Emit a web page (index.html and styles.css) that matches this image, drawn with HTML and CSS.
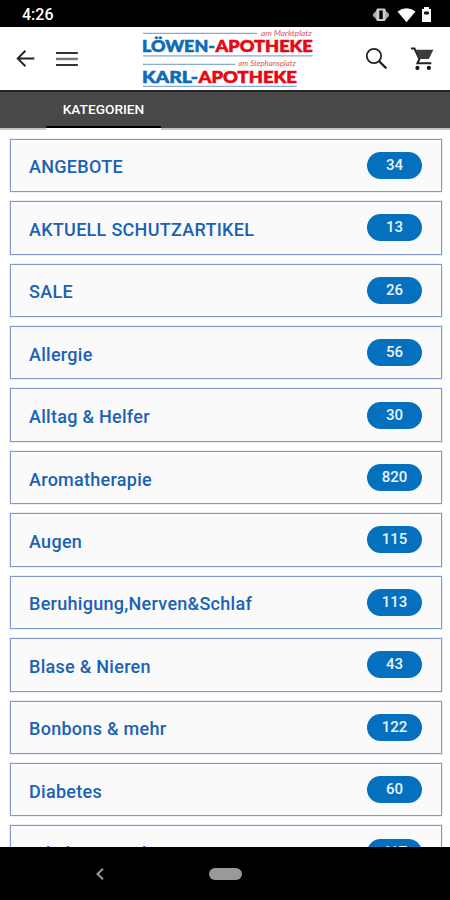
FILE: index.html
```
<!DOCTYPE html>
<html lang="de">
<head>
  <meta charset="UTF-8">
  <meta name="viewport" content="width=device-width, initial-scale=1.0">
  <title>Kategorien</title>
  <link rel="stylesheet" href="styles.css">
</head>
<body>

<div class="status-bar">
  <span class="time">4:26</span>
  <svg class="status-icons" width="62" height="18" viewBox="0 0 62 18">
    <path d="M1 8l2-2 2-2h8l2 2 2 2v2l-2 2-2 2H5l-2-2-2-2z" fill="#aaa"/>
    <rect x="4.500" y="2.500" width="9" height="12.500" rx="1" fill="#ccc"/>
    <rect x="7.300" y="4.500" width="3.400" height="8.500" fill="#000"/>
    <path d="M25.500 5.500Q34.500 -1 43.500 5.500L34.500 16.300z" fill="#fff"/>
    <path d="M50 3h2V1h5v2h2v13H50V3z" fill="#fff"/>
    <rect x="52" y="5.500" width="5" height="3" rx="1" fill="#111"/>
  </svg>
</div>

<header class="app-bar">
  <svg class="back" width="20" height="18" viewBox="0 0 20 18" fill="none" stroke="#222" stroke-width="1.900">
    <path d="M18.500 8.500H2M9.500 .7L1.700 8.500l7.800 7.800"/>
  </svg>
  <svg class="burger" width="22" height="16" viewBox="0 0 22 16">
    <path d="M0 1h22v2H0zM0 13h22v2H0z" fill="#333"/>
    <path d="M0 6.700h22v2.500H0z" fill="#777"/>
  </svg>
  <svg class="logo" width="176" height="62" viewBox="0 0 176 62">
    <path d="M2 5.200h115M2 27.800h171M2 36.500h93M2 58.500h155" stroke="#86acd6" stroke-width="1.200"/>
    <g class="logo-name">
      <text class="blue" x="1" y="23.800" textLength="73.500" lengthAdjust="spacingAndGlyphs">LÖWEN-</text>
      <text class="red" x="75" y="23.800" textLength="98" lengthAdjust="spacingAndGlyphs">APOTHEKE</text>
      <text class="blue" x="1" y="54.800" textLength="56.500" lengthAdjust="spacingAndGlyphs">KARL-</text>
      <text class="red" x="58" y="54.800" textLength="99" lengthAdjust="spacingAndGlyphs">APOTHEKE</text>
    </g>
    <g class="logo-place">
      <text x="121" y="7.500" textLength="51" lengthAdjust="spacingAndGlyphs">am Marktplatz</text>
      <text x="98" y="38.500" textLength="58" lengthAdjust="spacingAndGlyphs">am Stephansplatz</text>
    </g>
  </svg>
  <svg class="search" width="24" height="24" viewBox="0 0 24 24" fill="none" stroke="#222">
    <circle cx="9" cy="9" r="7.200" stroke-width="1.800"/>
    <path d="M14 14l7.500 7.500" stroke-width="2.300"/>
  </svg>
  <svg class="cart" width="26" height="26" viewBox="0 0 26 26">
    <path d="M1 2.500h3.500l5 10.500-2 4.300h14" fill="none" stroke="#222" stroke-width="2"/>
    <path d="M5.500 3.800H23.500L19 13H10z" fill="#3c3c3c"/>
    <circle cx="7.500" cy="22" r="2.100" fill="#111"/>
    <circle cx="19" cy="22" r="2.100" fill="#111"/>
  </svg>
</header>

<nav class="tabs">
  <div class="tab">KATEGORIEN</div>
</nav>

<main class="list">
  <div class="item"><span class="name">ANGEBOTE</span><span class="count">34</span></div>
  <div class="item"><span class="name">AKTUELL SCHUTZARTIKEL</span><span class="count">13</span></div>
  <div class="item"><span class="name">SALE</span><span class="count">26</span></div>
  <div class="item"><span class="name">Allergie</span><span class="count">56</span></div>
  <div class="item"><span class="name">Alltag &amp; Helfer</span><span class="count">30</span></div>
  <div class="item"><span class="name">Aromatherapie</span><span class="count">820</span></div>
  <div class="item"><span class="name">Augen</span><span class="count">115</span></div>
  <div class="item"><span class="name">Beruhigung,Nerven&amp;Schlaf</span><span class="count">113</span></div>
  <div class="item"><span class="name">Blase &amp; Nieren</span><span class="count">43</span></div>
  <div class="item"><span class="name">Bonbons &amp; mehr</span><span class="count">122</span></div>
  <div class="item"><span class="name">Diabetes</span><span class="count">60</span></div>
  <div class="item"><span class="name">Erkältung &amp; Ohren</span><span class="count">417</span></div>
</main>

<footer class="nav-bar">
  <svg class="nav-back" width="10" height="14" viewBox="0 0 10 14" fill="none" stroke="#999" stroke-width="2">
    <path d="M8 1.800L2.500 7 8 12.200"/>
  </svg>
  <div class="nav-home"></div>
</footer>

</body>
</html>
```
FILE: styles.css
```
* {
  box-sizing: border-box;
}

body {
  margin: 0;
  width: 450px;
  height: 900px;
  display: flex;
  flex-direction: column;
  overflow: hidden;
  background-color: #fff;
  font-family: Roboto, sans-serif;
}

.status-bar {
  flex: none;
  height: 27px;
  padding: 2px 16px 0 22px;
  display: flex;
  justify-content: space-between;
  align-items: center;
  background-color: #000;
  color: #fff;
}

.time {
  font-size: 16px;
  font-weight: 500;
}

.app-bar {
  flex: none;
  height: 63px;
  padding: 0 14px 0 16px;
  display: flex;
  align-items: center;
}

.burger {
  margin-left: 20px;
}

.logo {
  margin-left: 63px;
}

.logo-name {
  font-family: Lato, sans-serif;
  font-size: 16.5px;
  font-weight: 900;
  stroke-width: 0.6px;
}

.logo-place {
  font-family: Lato, sans-serif;
  font-size: 7.5px;
  font-style: italic;
  fill: #e0555c;
}

.blue {
  fill: #0f6bb5;
  stroke: #0f6bb5;
}

.red {
  fill: #e90613;
  stroke: #e90613;
}

.search {
  margin-left: 50px;
}

.cart {
  margin-left: 21px;
}

.tabs {
  flex: none;
  height: 40px;
  padding-left: 46px;
  background-color: #484848;
  border-top: 2px solid #222;
  border-bottom: 2px solid #c4c4c4;
}

.tab {
  width: 115px;
  height: 38px;
  line-height: 35px;
  text-align: center;
  color: #fff;
  font-size: 13.7px;
  font-weight: 500;
  border-bottom: 2px solid #fff;
  box-shadow: inset 0 -2px 0 #000;
}

.list {
  flex: 1;
  min-height: 0;
  overflow: hidden;
  padding: 8.8px 8.5px 0 9.5px;
  display: flex;
  flex-direction: column;
  gap: 9.1px;
}

.item {
  flex: none;
  height: 53.34px;
  padding: 0 18.5px;
  display: flex;
  justify-content: space-between;
  align-items: center;
  background-color: #fafafa;
  border: 1px solid #8499cb;
  box-shadow: 0 0 1px #8499cb;
}

.name {
  padding-top: 3px;
  color: #1a62b3;
  font-size: 18px;
  font-weight: 500;
  letter-spacing: 0.28px;
}

.count {
  width: 55px;
  height: 27px;
  line-height: 27px;
  border-radius: 14px;
  background-color: #0570be;
  color: #e8f4ff;
  font-size: 15px;
  font-weight: 500;
  text-align: center;
}

.nav-bar {
  flex: none;
  height: 53px;
  padding-left: 95px;
  display: flex;
  align-items: center;
  background-color: #000;
}

.nav-home {
  width: 33px;
  height: 12px;
  margin-left: 104px;
  border-radius: 6px;
  background-color: #999;
}
```
